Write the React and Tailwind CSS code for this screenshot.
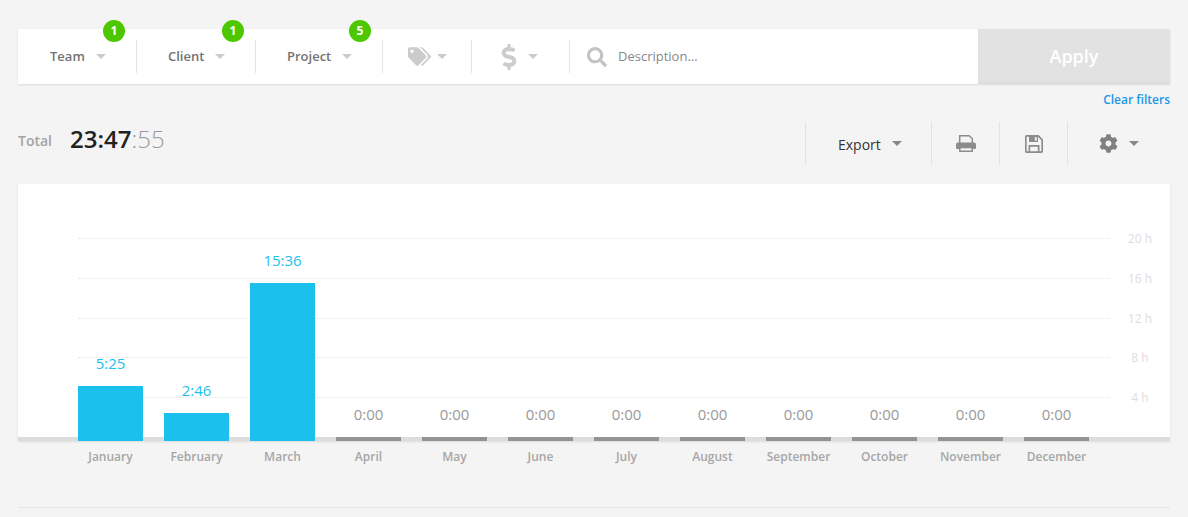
import React from "react";
import { FaTags, FaDollarSign, FaSearch, FaCog } from "react-icons/fa";

const months = [
  { name: "January", value: "5:25", height: "h-[55px]" },
  { name: "February", value: "2:46", height: "h-[28px]" },
  { name: "March", value: "15:36", height: "h-[158px]" },
  { name: "April", value: "0:00" },
  { name: "May", value: "0:00" },
  { name: "June", value: "0:00" },
  { name: "July", value: "0:00" },
  { name: "August", value: "0:00" },
  { name: "September", value: "0:00" },
  { name: "October", value: "0:00" },
  { name: "November", value: "0:00" },
  { name: "December", value: "0:00" },
];

const gridLines = [
  { label: "20 h", height: "h-[40px]" },
  { label: "16 h", height: "h-[40px]" },
  { label: "12 h", height: "h-[39px]" },
  { label: "8 h", height: "h-[40px]" },
  { label: "4 h", height: "h-[40px]" },
];

const Caret = ({ className }) => (
  <span className={`inline-block w-0 h-0 border-x-[5px] border-t-[5px] border-x-transparent ${className}`} />
);

const Badge = ({ count, className }) => (
  <span className={`absolute top-[-9px] w-[22px] h-[22px] rounded-full bg-[#4dc800] text-white text-[12px] font-bold flex items-center justify-center ${className}`}>
    {count}
  </span>
);

const FilterDropdown = ({ label, count, width, padding, badgeClass }) => (
  <div className={`relative flex items-center ${padding} ${width}`}>
    <span className="text-[13px] font-semibold text-[#737373]">{label}</span>
    <Caret className="ml-[11px] border-t-[#ccc]" />
    <Badge count={count} className={badgeClass} />
  </div>
);

const Divider = () => <div className="w-px h-[33px] bg-[#e5e5e5] self-center shrink-0" />;

const ToolDivider = () => <div className="w-px h-[43px] bg-[#e2e2e2] shrink-0" />;

// printer and floppy in the older solid icon shape
const PrintIcon = () => (
  <svg width="20" height="17" viewBox="0 0 20 17" className="text-[#8c8c8c]">
    <path d="M3.700 8V.800h9.500l3.100 3V8" fill="#f4f4f4" stroke="currentColor" strokeWidth="1.500" />
    <path d="M2 7.500h16a2 2 0 0 1 2 2V13a1 1 0 0 1-1 1H1a1 1 0 0 1-1-1V9.500a2 2 0 0 1 2-2z" fill="currentColor" />
    <path d="M3.800 12.500h12.400v3.700H3.800z" fill="#f4f4f4" stroke="currentColor" strokeWidth="1.500" />
  </svg>
);

const SaveIcon = () => (
  <svg width="18" height="18" viewBox="0 0 18 18" className="text-[#8c8c8c]">
    <path d="M1.800.8h11.400l4 4v11.400a1 1 0 0 1-1 1H1.800a1 1 0 0 1-1-1V1.800a1 1 0 0 1 1-1z" fill="none" stroke="currentColor" strokeWidth="1.700" />
    <path d="M4 1h9v6H4z" fill="currentColor" />
    <path d="M9.800 2.200h2v3.400h-2z" fill="#f4f4f4" />
    <path d="M3.500 10h11v7h-1.700v-5.300H5.200V17H3.500z" fill="currentColor" />
  </svg>
);

const App = () => {
  return (
    <div className="w-full h-[517px] overflow-hidden bg-[#f4f4f4] px-[18px] pt-[29px] font-['Open_Sans',sans-serif]">
      {/* Filter bar */}
      <div className="flex h-[55px] bg-white shadow-[0_1px_2px_rgba(0,0,0,0.1)]">
        <FilterDropdown label="Team" count="1" width="w-[118px]" padding="pl-[32px]" badgeClass="left-[85px]" />
        <Divider />
        <FilterDropdown label="Client" count="1" width="w-[118px]" padding="pl-[31px]" badgeClass="left-[85px]" />
        <Divider />
        <FilterDropdown label="Project" count="5" width="w-[126px]" padding="pl-[31px]" badgeClass="left-[93px]" />
        <Divider />
        <div className="flex items-center pl-[25px] w-[88px]">
          <FaTags size={23} className="text-[#ccc]" />
          <Caret className="ml-[6px] border-t-[#ccc]" />
        </div>
        <Divider />
        <div className="flex items-center pl-[24px] w-[97px]">
          <FaDollarSign size={26} className="text-[#ccc]" />
          <Caret className="ml-[6px] border-t-[#ccc]" />
        </div>
        <Divider />
        <div className="flex items-center flex-1 pl-[17px]">
          <FaSearch size={20} className="text-[#c4c4c4]" />
          <span className="ml-[11px] text-[13px] text-[#888]">Description...</span>
        </div>
        <button className="w-[192px] bg-[#e2e2e2] border-b-2 border-[#dcdcdc] pt-[2px] text-white text-[18px] font-semibold">
          Apply
        </button>
      </div>

      <div className="flex justify-end h-[24px] pt-[6px]">
        <a className="text-[12px] leading-[19px] font-semibold text-[#1a96ea]">Clear filters</a>
      </div>

      {/* Total + toolbar */}
      <div className="flex items-center justify-between mt-[14px] h-[43px]">
        <div className="flex items-center -mt-[9px]">
          <span className="text-[14px] text-[#a3a3a3] mt-[3px] font-semibold">Total</span>
          <span className="ml-[18px] text-[24px] leading-[32px] font-semibold text-[#222]">23:47</span>
          <span className="text-[24px] leading-[32px] font-light text-[#999]">:55</span>
        </div>
        <div className="flex items-center">
          <ToolDivider />
          <div className="flex items-center w-[125px] pl-[32px] pt-[2px]">
            <span className="text-[14px] text-[#333]">Export</span>
            <Caret className="ml-[11px] -mt-[3px] border-t-[#888]" />
          </div>
          <ToolDivider />
          <div className="flex items-center justify-center w-[67px]">
            <PrintIcon />
          </div>
          <ToolDivider />
          <div className="flex items-center justify-center w-[67px]">
            <SaveIcon />
          </div>
          <ToolDivider />
          <div className="flex items-center w-[102px] pl-[31px]">
            <FaCog size={19} className="text-[#808080]" />
            <Caret className="ml-[11px] border-t-[#888]" />
          </div>
        </div>
      </div>

      {/* Chart */}
      <div className="relative mt-[19px] h-[257px] bg-white shadow-[0_1px_2px_rgba(0,0,0,0.1)]">
        <div className="absolute left-[60px] right-0 top-[54px]">
          {gridLines.map((line) => (
            <div key={line.label} className={`flex items-start ${line.height}`}>
              <div className="w-[1032px] border-t border-dotted border-[#e6e6e6]" />
              <span className="w-[60px] -mt-[8px] text-center text-[12px] leading-[18px] text-[#ddd]">{line.label}</span>
            </div>
          ))}
        </div>
        <div className="absolute left-0 right-0 bottom-0 h-[4px] bg-[#dcdcdc]" />
        <div className="relative flex items-end gap-[21px] h-full pl-[60px]">
          {months.map((month) => (
            <div key={month.name} className="flex flex-col items-center w-[65px]">
              <span className={`mb-[13px] text-[15px] leading-[19px] ${month.height ? "text-[#1cc0ec]" : "text-[#999]"}`}>
                {month.value}
              </span>
              <div className={`w-full ${month.height ? `${month.height} bg-[#1cc0ec]` : "h-[4px] bg-[#939393]"}`} />
            </div>
          ))}
        </div>
      </div>

      {/* Month labels */}
      <div className="flex gap-[21px] pl-[60px] pt-[7px]">
        {months.map((month) => (
          <span key={month.name} className="w-[65px] text-center whitespace-nowrap text-[12px] leading-[17px] font-semibold text-[#a6a6a6]">
            {month.name}
          </span>
        ))}
      </div>

      <div className="mt-[42px] border-t border-[#e5e5e5]" />
    </div>
  );
};

export default App;
